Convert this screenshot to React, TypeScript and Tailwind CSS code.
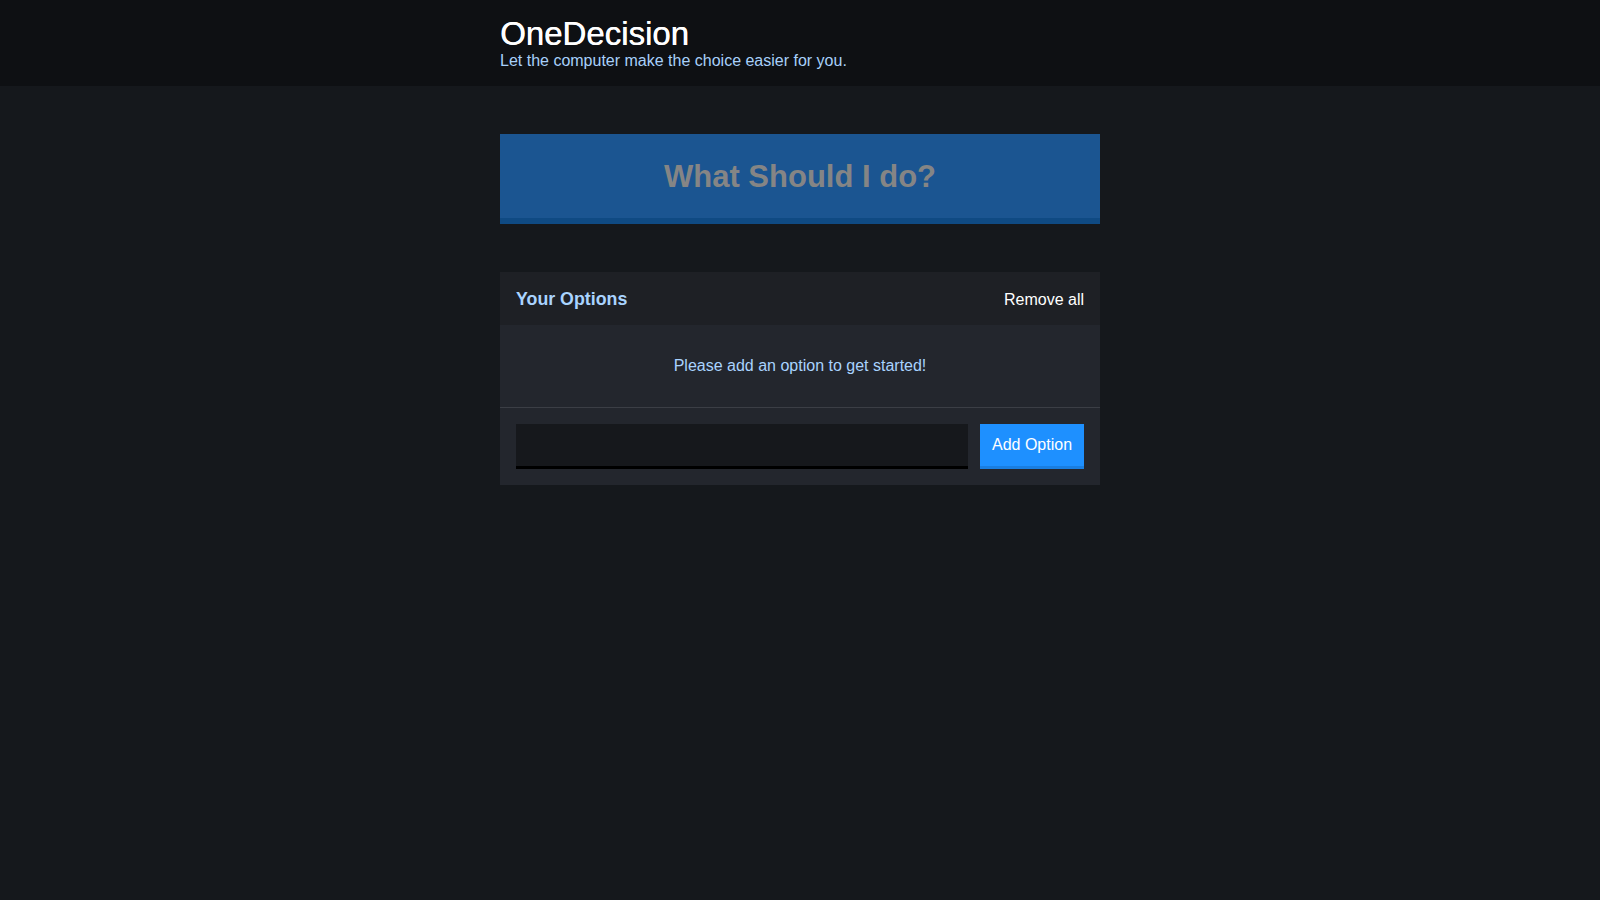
import React from "react";

export default function App() {
  return (
    <div
      className="min-h-[900px] w-full bg-[#15181c]"
      style={{ fontFamily: '"Liberation Sans", Arial, sans-serif' }}
    >
      <header className="bg-[#0e1013] pt-4 pb-4">
        <div className="mx-auto w-[600px]">
          <h1 className="m-0 text-[33px] leading-[36px] font-normal text-white [text-shadow:0.4px_0_0_#fff]">OneDecision</h1>
          <h2 className="m-0 text-[16px] leading-[18px] font-normal text-[#a8d0fa]">
            Let the computer make the choice easier for you.
          </h2>
        </div>
      </header>
      <main className="mx-auto w-[600px] pt-12">
        <button className="flex h-[90px] w-full items-center justify-center border-b-[6px] border-[#0f4a83] bg-[#1b5591] pt-[2px] text-[31px] font-bold text-[#858585]">
          What Should I do?
        </button>
        <div className="mt-12 bg-[#23262d]">
          <div className="flex h-[53px] items-center justify-between bg-[#1e2025] px-4 pt-[2px]">
            <h3 className="text-[17.8px] font-bold text-[#a9d3ff]">Your Options</h3>
            <button className="text-[16px] text-white">Remove all</button>
          </div>
          <div className="flex h-[83px] items-center justify-center border-b border-[#3b3e45]">
            <p className="text-[16px] text-[#a9d3ff]">Please add an option to get started!</p>
          </div>
          <form className="flex gap-3 p-4" onSubmit={(e) => e.preventDefault()}>
            <input
              type="text"
              className="h-[45px] flex-1 border-b-[3px] border-black bg-[#16181c] px-3 text-white outline-none"
            />
            <button className="h-[45px] w-[104px] border-b-[3px] border-[#1a7ee0] bg-[#1e90ff] text-[16px] text-white">
              Add Option
            </button>
          </form>
        </div>
      </main>
    </div>
  );
}
